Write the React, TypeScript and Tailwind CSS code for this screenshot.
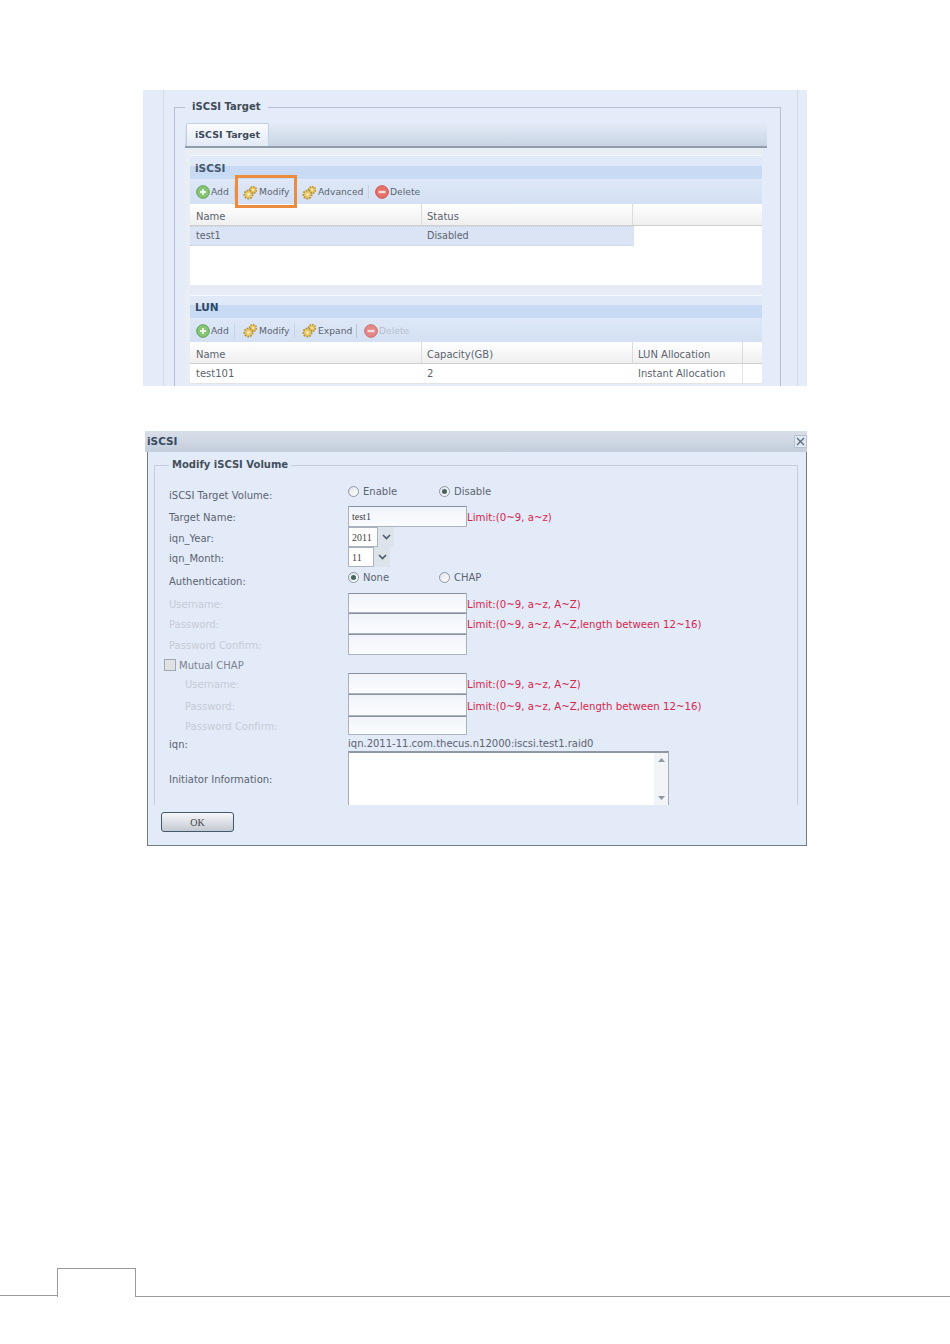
const font = "font-['DejaVu_Sans',sans-serif]"

function AddIcon() {
  return (
    <svg width="14" height="14" viewBox="0 0 14 14" className="shrink-0">
      <circle cx="7" cy="7" r="6.3" fill="#86c573" stroke="#5ba355" />
      <path d="M7 4v6M4 7h6" stroke="#eef8ea" strokeWidth="1.8" />
    </svg>
  )
}

function DeleteIcon({ faded }: { faded?: boolean }) {
  return (
    <svg width="14" height="14" viewBox="0 0 14 14" className={faded ? "shrink-0 opacity-80" : "shrink-0"}>
      <circle cx="7" cy="7" r="6.3" fill="#e6706a" stroke="#c9504c" />
      <path d="M3.5 7h7" stroke="#f8dedb" strokeWidth="2.4" />
    </svg>
  )
}

function GearIcon() {
  return (
    <svg width="15" height="15" viewBox="0 0 15 15" className="shrink-0">
      <circle cx="10" cy="5" r="3.4" fill="#ecc65a" stroke="#b8994a" strokeWidth="1.6" strokeDasharray="1.6 1" />
      <circle cx="10" cy="5" r="1" fill="#fff6cf" />
      <circle cx="5.5" cy="9.5" r="4.2" fill="#e9c868" stroke="#b0924a" strokeWidth="1.8" strokeDasharray="1.8 1.1" />
      <circle cx="5.5" cy="9.5" r="1.2" fill="#fff6cf" />
    </svg>
  )
}

type ToolItem = { label: string; icon: "add" | "gear" | "del"; box: string; faded?: boolean }

function Toolbar({ items, box }: { items: ToolItem[]; box: string }) {
  return (
    <div className={"flex items-center bg-gradient-to-b from-[#dde7f7] to-[#d4e0f3] text-[9.2px] text-[#5c6470] " + box}>
      {items.map((item) => (
        <div key={item.label} className={"flex h-[14px] items-center " + item.box}>
          {item.icon === "add" && <AddIcon />}
          {item.icon === "gear" && <GearIcon />}
          {item.icon === "del" && <DeleteIcon faded={item.faded} />}
          <span className={item.faded ? "ml-[1px] text-[#b9c0cc]" : "ml-[1px]"}>{item.label}</span>
        </div>
      ))}
    </div>
  )
}

function SectionTitle({ title, box, labelBox }: { title: string; box: string; labelBox: string }) {
  return (
    <div className={"relative border-t border-[#f4f7fc] bg-[#e0e9f8] " + box}>
      <div className="absolute inset-x-0 bottom-[1px] h-[13px] bg-[#c8daf4]" />
      <span className={"absolute left-[5px] text-[10.5px] font-bold " + labelBox}>{title}</span>
    </div>
  )
}

function HeaderCell({ label, box }: { label: string; box: string }) {
  return (
    <div className={"flex h-full items-center border-r border-[#dcdcdc] pt-[3px] " + box}>{label}</div>
  )
}

function TargetPanel() {
  return (
    <div className="h-[296px] w-[664px] overflow-hidden bg-[#e4ebf9] pl-[20px] pr-[9px]">
      <div className="h-full border-x border-[#d2dbeb] pl-[10px] pr-[16px] pt-[9px]">
        <fieldset className="h-[320px] rounded-none border border-[#b6c0d2] px-[10px] pb-0 pt-[8px]">
          <legend className="px-[7px] text-[10px] font-bold leading-[16px] text-[#3e4a56]">iSCSI Target</legend>
          <div className="mr-[3px] flex h-[25px] items-end border-b-2 border-[#8e9cab] bg-gradient-to-b from-[#e4ebf6] to-[#c8d4e5]">
            <div className="ml-[1px] flex h-[23px] w-[83px] items-center justify-center rounded-t-[2px] border border-b-0 border-[#c3cfdf] bg-gradient-to-b from-[#fafcff] to-[#e2eaf6] text-[9.5px] font-bold text-[#3e4a56]">
              iSCSI Target
            </div>
          </div>
          <div className="mr-[8px] bg-[#e9edf4] pl-[5px] pt-[7px]">
            <SectionTitle title="iSCSI" box="h-[25px]" labelBox="top-[5px] text-[#475868]" />
            <div className="relative">
              <Toolbar
                box="h-[24px]"
                items={[
                  { label: "Add", icon: "add", box: "w-[45px] pl-[6px] border-r border-[#c6d2e6]" },
                  { label: "Modify", icon: "gear", box: "w-[60px] pl-[8px] border-r border-[#c6d2e6]" },
                  { label: "Advanced", icon: "gear", box: "w-[74px] pl-[7px] border-r border-[#c6d2e6]" },
                  { label: "Delete", icon: "del", box: "w-[90px] pl-[6px]" },
                ]}
              />
              <div className="absolute left-[45px] top-[-5px] h-[33px] w-[62px] border-[3px] border-[#ec8c3c]" />
            </div>
            <div className="flex h-[22px] border-b border-[#cfcfcf] bg-gradient-to-b from-white to-[#efefef] text-[10px] text-[#5c6470]">
              <HeaderCell label="Name" box="w-[232px] pl-[6px]" />
              <HeaderCell label="Status" box="w-[211px] pl-[5px]" />
            </div>
            <div className="h-[59px] bg-white">
              <div className="flex h-[20px] w-[444px] items-center border-y border-dotted border-[#c3cfe3] bg-[#dbe4f4] pt-[1px] text-[9.6px] text-[#5c6470]">
                <div className="w-[232px] pl-[6px]">test1</div>
                <div className="pl-[5px]">Disabled</div>
              </div>
            </div>
            <div className="h-[10px] bg-[#e6ebf6]" />
            <SectionTitle title="LUN" box="h-[24px]" labelBox="top-[4px] text-[#2f4a63]" />
            <Toolbar
              box="h-[23px]"
              items={[
                { label: "Add", icon: "add", box: "w-[45px] pl-[6px] border-r border-[#c6d2e6]" },
                { label: "Modify", icon: "gear", box: "w-[60px] pl-[8px] border-r border-[#c6d2e6]" },
                { label: "Expand", icon: "gear", box: "w-[62px] pl-[7px] border-r border-[#b8c4d8]" },
                { label: "Delete", icon: "del", box: "w-[70px] pl-[7px]", faded: true },
              ]}
            />
            <div className="flex h-[22px] border-b border-[#cfcfcf] bg-gradient-to-b from-white to-[#efefef] text-[10px] text-[#5c6470]">
              <HeaderCell label="Name" box="w-[232px] pl-[6px]" />
              <HeaderCell label="Capacity(GB)" box="w-[211px] pl-[5px]" />
              <HeaderCell label="LUN Allocation" box="w-[110px] pl-[5px]" />
            </div>
            <div className="flex h-[20px] items-center border-b border-[#e4e4e4] bg-white text-[10px] text-[#5c6470]">
              <div className="w-[232px] pl-[6px]">test101</div>
              <div className="w-[211px] pl-[5px]">2</div>
              <div className="h-full w-[110px] border-r border-[#e4e4e4] pl-[5px] leading-[20px]">Instant Allocation</div>
            </div>
          </div>
        </fieldset>
      </div>
    </div>
  )
}

function Radio({ checked }: { checked?: boolean }) {
  return (
    <span className="flex h-[11px] w-[11px] shrink-0 items-center justify-center rounded-full border border-[#8d97a3] bg-gradient-to-br from-[#dfe3e8] to-white">
      {checked && <span className="h-[5px] w-[5px] rounded-full bg-[#47635c]" />}
    </span>
  )
}

function RadioPair({ a, b, first }: { a: string; b: string; first?: boolean }) {
  return (
    <div className="flex items-center text-[10px] text-[#5c6470]">
      <div className="flex w-[91px] items-center gap-[4px]">
        <Radio checked={first} />
        {a}
      </div>
      <div className="flex items-center gap-[4px]">
        <Radio checked={!first} />
        {b}
      </div>
    </div>
  )
}

function TextBox({ value }: { value?: string }) {
  return (
    <div className="flex h-full w-[119px] items-center border border-[#a9b2bd] border-t-[#8b939c] bg-gradient-to-b from-[#f0f4fa] to-[#fbfcfe] pl-[3px] font-['Liberation_Serif',serif] text-[10px] text-[#444]">
      {value}
    </div>
  )
}

function Limit({ text }: { text: string }) {
  return <span className="self-center pt-[3px] text-[10.2px] text-[#d6284c]">{text}</span>
}

function Row({ label, box, labelBox, children }: { label: string; box: string; labelBox?: string; children?: React.ReactNode }) {
  return (
    <div className={"flex " + box}>
      <div className={"flex w-[179px] shrink-0 items-center pt-[2px] text-[10px] " + (labelBox ?? "text-[#5c6470]")}>{label}</div>
      {children}
    </div>
  )
}

function Picker({ value, box }: { value: string; box: string }) {
  return (
    <div className="flex h-full items-stretch">
      <div className={"flex items-center border border-[#a9b2bd] bg-white pl-[3px] font-['Liberation_Serif',serif] text-[10px] text-[#444] " + box}>{value}</div>
      <div className="flex w-[16px] items-center justify-center bg-[#dde3eb]">
        <svg width="9" height="6" viewBox="0 0 9 6">
          <path d="M1 1l3.5 3.5L8 1" fill="none" stroke="#4b5a6a" strokeWidth="1.6" />
        </svg>
      </div>
    </div>
  )
}

const LIMIT_A = "Limit:(0~9, a~z, A~Z)"
const LIMIT_B = "Limit:(0~9, a~z, A~Z,length between 12~16)"
const OFF = "text-[#c6ccd6]"

function ModifyDialog() {
  return (
    <div className="ml-[2px] mt-[45px] flex h-[415px] w-[662px] flex-col">
      <div className="flex h-[21px] items-center justify-between bg-gradient-to-b from-[#d9dfe9] to-[#c4cedc] pl-[2px] text-[10.5px] font-bold text-[#3a4b5c]">
        iSCSI
        <div className="flex h-[13px] w-[13px] items-center justify-center border border-[#b6c2d2] bg-[#dfe7f3]">
          <svg width="9" height="9" viewBox="0 0 9 9">
            <path d="M1 1l7 7M8 1l-7 7" stroke="#5a6b7c" strokeWidth="1.3" />
          </svg>
        </div>
      </div>
      <div className="ml-[2px] flex min-h-0 flex-1 flex-col border-x border-b border-[#6f7c88] bg-[#e3eaf8] pl-[6px] pr-[8px]">
        <fieldset className="mt-[5px] h-[348px] rounded-none border border-b-0 border-[#c3cddc] pl-[14px]">
          <legend className="px-[3px] text-[10px] font-bold leading-[16px] text-[#44505c]">Modify iSCSI Volume</legend>
          <div className="pt-[10px]">
            <Row label="iSCSI Target Volume:" box="h-[23px]">
              <div className="-mt-[6px] flex"><RadioPair a="Enable" b="Disable" /></div>
            </Row>
            <Row label="Target Name:" box="h-[21px]">
              <TextBox value="test1" />
              <Limit text="Limit:(0~9, a~z)" />
            </Row>
            <Row label="iqn_Year:" box="h-[20px]"><Picker value="2011" box="w-[30px]" /></Row>
            <Row label="iqn_Month:" box="h-[20px]"><Picker value="11" box="w-[26px]" /></Row>
            <Row label="Authentication:" box="h-[26px]">
              <div className="-mt-[6px] flex"><RadioPair a="None" b="CHAP" first /></div>
            </Row>
            <Row label="Username:" box="h-[20px]" labelBox={OFF}><TextBox /><Limit text={LIMIT_A} /></Row>
            <Row label="Password:" box="h-[21px]" labelBox={OFF}><TextBox /><Limit text={LIMIT_B} /></Row>
            <Row label="Password Confirm:" box="h-[21px]" labelBox={OFF}><TextBox /></Row>
            <div className="flex h-[18px] items-center gap-[3px] pt-[2px] text-[10px] text-[#7b838e]">
              <span className="-ml-[5px] h-[12px] w-[12px] border border-[#a3a8ae] bg-[#dfe2e4]" />
              Mutual CHAP
            </div>
            <Row label="Username:" box="h-[21px]" labelBox={OFF + " pl-[16px]"}><TextBox /><Limit text={LIMIT_A} /></Row>
            <Row label="Password:" box="h-[22px]" labelBox={OFF + " pl-[16px]"}><TextBox /><Limit text={LIMIT_B} /></Row>
            <Row label="Password Confirm:" box="h-[19px]" labelBox={OFF + " pl-[16px]"}><TextBox /></Row>
            <Row label="iqn:" box="h-[16px]">
              <span className="pt-[1px] text-[10px] leading-[16px] text-[#5c6470]">iqn.2011-11.com.thecus.n12000:iscsi.test1.raid0</span>
            </Row>
            <Row label="Initiator Information:" box="h-[54px]">
              <div className="flex h-full w-[321px] border-x border-t-2 border-[#a4adb8] border-t-[#8f98a3] bg-white">
                <div className="flex-1" />
                <div className="flex w-[14px] flex-col items-center justify-between bg-[#f2f4f7] py-[5px]">
                  <svg width="7" height="4" viewBox="0 0 7 4"><path d="M3.5 0L7 4H0z" fill="#8f99a4" /></svg>
                  <svg width="7" height="4" viewBox="0 0 7 4"><path d="M3.5 4L0 0h7z" fill="#8f99a4" /></svg>
                </div>
              </div>
            </Row>
          </div>
        </fieldset>
        <div className="pl-[7px] pt-[7px]">
          <button className="flex h-[20px] w-[73px] items-center justify-center rounded-[3px] border border-[#45596c] bg-gradient-to-b from-[#f6f7f9] to-[#c3c9d2] font-['Liberation_Serif',serif] text-[10px] text-[#444]">
            OK
          </button>
        </div>
      </div>
    </div>
  )
}

function PageFooter() {
  return (
    <div className="mt-[422px] flex h-[29px] items-stretch">
      <div className="mb-[1px] w-[57px] border-b border-[#9a9a9a]" />
      <div className="w-[79px] border-x border-t border-[#9a9a9a]" />
      <div className="flex-1 border-b border-[#9a9a9a]" />
    </div>
  )
}

export default function App() {
  return (
    <div className={"h-[1344px] w-[950px] overflow-hidden bg-white pt-[90px] " + font}>
      <div className="pl-[143px]">
        <TargetPanel />
        <ModifyDialog />
      </div>
      <PageFooter />
    </div>
  )
}
